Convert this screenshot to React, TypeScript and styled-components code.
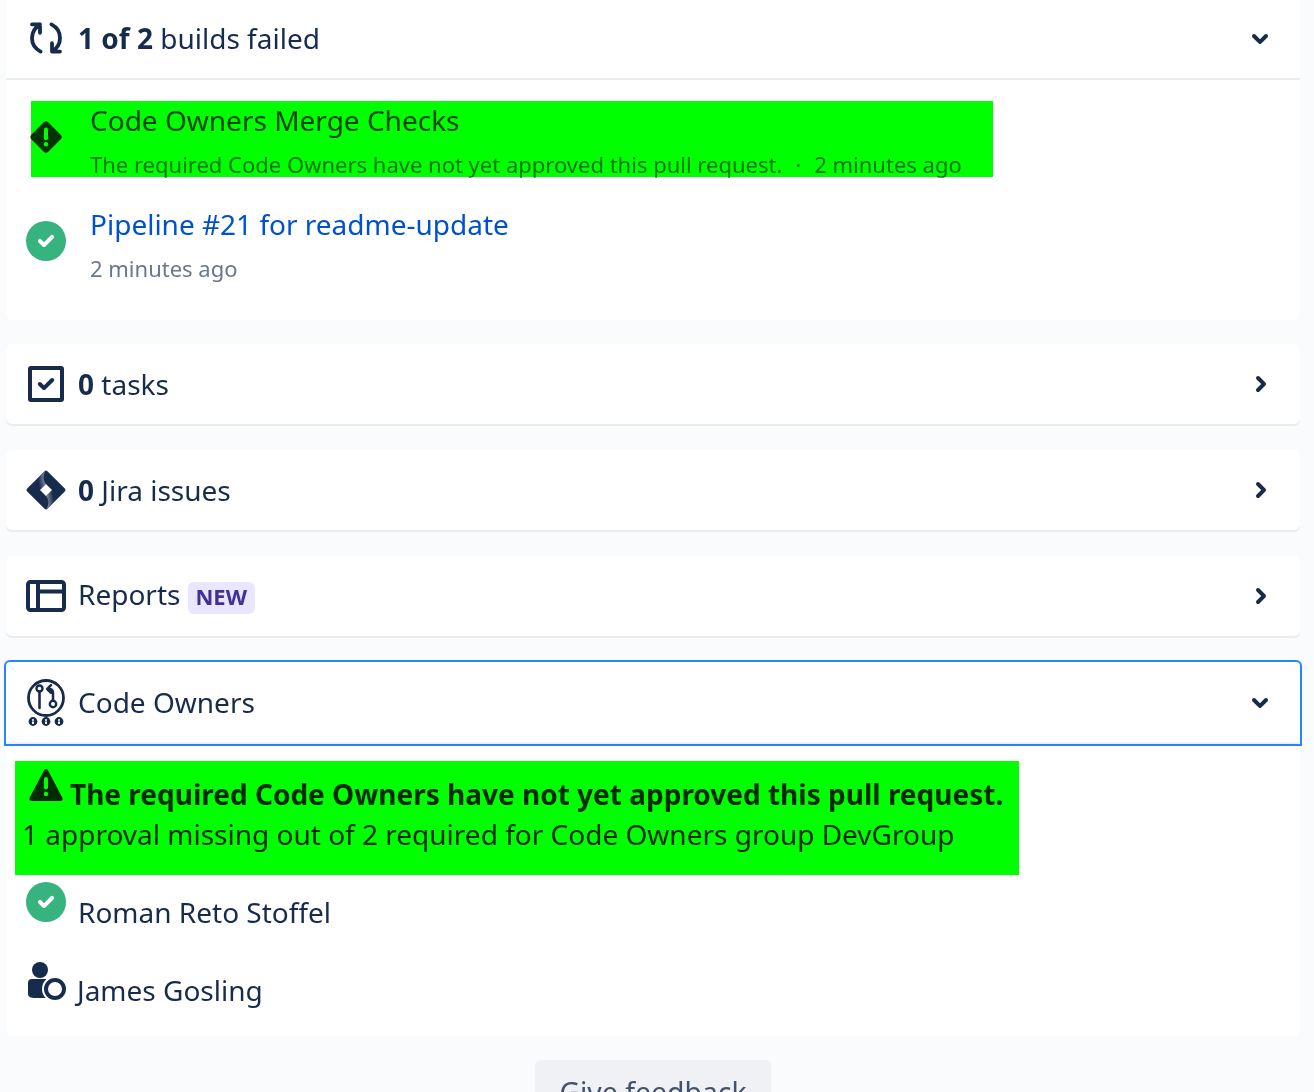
import React from "react";
import styled, { createGlobalStyle } from "styled-components";

const GlobalStyle = createGlobalStyle`
  html, body {
    margin: 0;
    height: 1092px;
    overflow: hidden;
    background: #fafbfc;
    color: #172b4d;
    font-family: "Noto Sans", "Liberation Sans", sans-serif;
    font-size: 28px;
  }
`;

const Page = styled.div`
  display: flex;
  flex-direction: column;
  padding: 0 14px 0 6px;
`;

const Card = styled.section<{ $flat?: boolean }>`
  background: #fff;
  border-radius: ${({ $flat }) => ($flat ? "0 0 6px 6px" : "6px")};
  margin-bottom: 24px;
`;

const CollapsedCard = styled(Card)`
  margin-bottom: 26px;
  box-shadow: 0 2px 0 #ebecf0;
`;

const Header = styled.div<{ $ruled?: boolean; $focused?: boolean }>`
  display: flex;
  align-items: center;
  height: 80px;
  padding: 0 16px;
  box-sizing: border-box;
  ${({ $ruled }) => $ruled && "padding-bottom: 2px; border-bottom: 2px solid #ebecf0;"}
  ${({ $focused }) =>
    $focused &&
    `
    margin: -2px -2px 0;
    height: 86px;
    padding-bottom: 2px;
    border: 2px solid #2684ff;
    border-radius: 6px 6px 0 0;
    box-shadow: inset 0 -2px 0 #f0f2f8;
  `}
`;

const IconSlot = styled.span`
  display: flex;
  flex: none;
  width: 48px;
  height: 48px;
`;

const BuildIcon = styled(IconSlot)`
  margin-top: 12px;
`;

const Title = styled.div`
  flex: 1;
  margin-left: 8px;
  line-height: 40px;
`;

const BadgedTitle = styled(Title)`
  display: flex;
  align-items: center;
  height: 40px;
`;

const TitleText = styled.span`
  padding-bottom: 4px;
`;

const Strong = styled.strong`
  font-weight: 700;
`;

const Badge = styled.span`
  margin: 4px 0 0 8px;
  padding: 0 8px 0 7px;
  height: 32px;
  line-height: 28px;
  border-radius: 6px;
  background: #eae6ff;
  color: #403294;
  font-size: 22px;
  font-weight: 700;
`;

const BuildList = styled.div`
  display: flex;
  flex-direction: column;
  gap: 28px;
  padding: 21px 0 39px 16px;
`;

const BuildRow = styled.div`
  position: relative;
  display: flex;
  align-items: flex-start;
  height: 76px;
`;

const BuildText = styled.div`
  margin: -1px 0 0 20px;
  white-space: nowrap;
`;

const BuildName = styled.div<{ $link?: boolean }>`
  line-height: 40px;
  color: ${({ $link }) => ($link ? "#0052cc" : "#344563")};
`;

const BuildMeta = styled.div`
  margin-top: 8px;
  line-height: 32px;
  font-size: 22px;
  color: #6b778c;
`;

const Dot = styled.span`
  margin: 0 13px;
`;

/* flat green marker laid over the finished row */
const Marker = styled.div<{ $left: number; $width: number }>`
  position: absolute;
  top: 0;
  bottom: 0;
  left: ${({ $left }) => $left}px;
  width: ${({ $width }) => $width}px;
  background: #00ff00;
  mix-blend-mode: multiply;
  pointer-events: none;
`;

const OwnersBody = styled.div`
  padding: 15px 0 18px;
`;

const Notice = styled.div`
  position: relative;
  margin-left: 9px;
  width: 1004px;
  height: 114px;
  padding: 8px 8px 0;
  box-sizing: border-box;
`;

const NoticeHead = styled.div`
  display: flex;
  align-items: flex-start;
  height: 46px;
`;

const NoticeTitle = styled.strong`
  padding-top: 5px;
  line-height: 40px;
  font-weight: 700;
`;

const NoticeIcon = styled.span`
  display: flex;
  margin: -8px 0 0 -1px;
`;

const NoticeLine = styled.div`
  margin: -1px 0 0 -1px;
  line-height: 40px;
`;

const Owner = styled.div<{ $height: number }>`
  display: flex;
  align-items: flex-start;
  height: ${({ $height }) => $height}px;
  padding: 3px 0 0 16px;
  box-sizing: border-box;
`;

const OwnerName = styled.span<{ $shift: number; $drop: number }>`
  margin-left: ${({ $shift }) => $shift}px;
  padding-top: ${({ $drop }) => $drop}px;
  line-height: 40px;
`;

const FeedbackRow = styled.div`
  display: flex;
  justify-content: center;
`;

const FeedbackButton = styled.button`
  width: 236px;
  height: 64px;
  border: 0;
  border-radius: 6px;
  background: #f0f1f4;
  color: #42526e;
  font: inherit;
  font-size: 28.4px;
  line-height: 40px;
  padding: 10px 0;
`;

const RefreshIcon = () => {
  const half = (
    <path
      d="M9.3 18.8C6.6 17.4 5 14.9 5 12c0-2.800 1.500-5.200 4-6.800M5 5.200h4v4.200"
      fill="none"
      stroke="currentColor"
      strokeWidth="1.9"
      strokeLinecap="round"
      strokeLinejoin="round"
    />
  );
  return (
    <svg width="48" height="48" viewBox="0 0 24 24">
      {half}
      <g transform="rotate(180 12 12)">{half}</g>
    </svg>
  );
};

const Chevron = ({ open }: { open: boolean }) => (
  <svg width="48" height="48" viewBox="0 0 24 24" style={open ? undefined : { transform: "rotate(-90deg)" }}>
    <path
      fill="currentColor"
      d="M8.292 10.293a1.009 1.009 0 0 0 0 1.419l2.939 2.965c.218.215.5.322.779.322s.556-.107.769-.322l2.93-2.955a1.01 1.01 0 0 0 0-1.419.987.987 0 0 0-1.406 0l-2.298 2.317-2.307-2.327a.99.99 0 0 0-1.406 0z"
    />
  </svg>
);

const ErrorIcon = () => (
  <svg width="48" height="48" viewBox="0 0 24 24">
    <rect x="6" y="6" width="12" height="12" rx="1.6" transform="rotate(45 12 12)" fill="#de350b" />
    <rect x="11" y="7.2" width="2" height="6.4" rx="1" fill="#fff" />
    <circle cx="12" cy="15.6" r="1.1" fill="#fff" />
  </svg>
);

const CheckCircle = () => (
  <svg width="48" height="48" viewBox="0 0 24 24">
    <circle cx="12" cy="12" r="10" fill="#36b37e" />
    <path
      fill="#fff"
      d="M9.707 11.293a1 1 0 1 0-1.414 1.414l2 2a1 1 0 0 0 1.414 0l4-4a1 1 0 1 0-1.414-1.414L11 12.586l-1.293-1.293z"
    />
  </svg>
);

const TasksIcon = () => (
  <svg width="48" height="48" viewBox="0 0 24 24">
    <rect x="4" y="4" width="16" height="16" rx="0.5" fill="none" stroke="currentColor" strokeWidth="2" />
    <path d="M8.9 12l2.1 2.1 4.1-4.1" fill="none" stroke="currentColor" strokeWidth="2" strokeLinecap="round" strokeLinejoin="round" />
  </svg>
);

const JiraIcon = () => {
  const band = (
    <path fill="url(#jiraBand)" d="M12 21.7L15.4 18.3c1-1.2 1.2-4.2-.4-6.3l-3 3c1.6 1.8 1.6 5 0 6.7z" />
  );
  return (
    <svg width="48" height="48" viewBox="0 0 24 24">
      <defs>
        <linearGradient id="jiraBand" x1="0.1" y1="0.7" x2="0.9" y2="0.4">
          <stop offset="0" stopColor="#fff" stopOpacity="0.5" />
          <stop offset="1" stopColor="#fff" stopOpacity="0" />
        </linearGradient>
      </defs>
      <path
        fill="currentColor"
        fillRule="evenodd"
        d="M11.3 2.6a1 1 0 0 1 1.4 0l8.7 8.7a1 1 0 0 1 0 1.4l-8.7 8.7a1 1 0 0 1-1.4 0l-8.7-8.7a1 1 0 0 1 0-1.4zM12 9l-3 3 3 3 3-3z"
      />
      {band}
      <g transform="rotate(180 12 12)">{band}</g>
    </svg>
  );
};

const ReportsIcon = () => (
  <svg width="48" height="48" viewBox="0 0 24 24">
    <rect x="3" y="5" width="18" height="14" rx="1.2" fill="none" stroke="currentColor" strokeWidth="2" />
    <path d="M8 5v14M8 9.75h13" fill="none" stroke="currentColor" strokeWidth="2" />
  </svg>
);

const CodeOwnersIcon = () => (
  <svg width="48" height="50" viewBox="0 -1 48 50">
    <circle cx="24" cy="19" r="17.5" fill="none" stroke="currentColor" strokeWidth="2.8" />
    <circle cx="17.5" cy="9.5" r="3" fill="none" stroke="currentColor" strokeWidth="2.4" />
    <path d="M17.5 12.5V29" fill="none" stroke="currentColor" strokeWidth="2.6" strokeLinecap="round" />
    <path
      d="M31 21.5V14c0-2.5-1.5-4-4-4h-1.500M29 6.200L25.200 10l3.800 3.800"
      fill="none"
      stroke="currentColor"
      strokeWidth="2.500"
      strokeLinecap="round"
      strokeLinejoin="round"
    />
    <circle cx="31" cy="25" r="3.200" fill="none" stroke="currentColor" strokeWidth="2.400" />
    {[11, 24, 37].map((cx) => (
      <g key={cx}>
        <circle cx={cx} cy="42.500" r="4.400" fill="currentColor" />
        <circle cx={cx} cy="40.900" r="1" fill="#fff" />
        <rect x={cx - 1} y="42.500" width="2" height="2.400" fill="#fff" />
      </g>
    ))}
  </svg>
);

const WarningIcon = () => (
  <svg width="48" height="48" viewBox="0 0 24 24">
    <path
      fill="currentColor"
      d="M12.900 4.500l7.300 13.900c.4.800-.1 1.600-1 1.600H4.800c-.9 0-1.400-.8-1-1.600l7.300-13.900c.4-.7 1.400-.7 1.800 0z"
    />
    <rect x="11" y="8" width="2" height="6.300" rx="1" fill="#fff" />
    <circle cx="12" cy="16.500" r="1.100" fill="#fff" />
  </svg>
);

const PersonPendingIcon = () => (
  <svg width="48" height="48" viewBox="0 0 48 48">
    <circle cx="18" cy="10" r="8" fill="currentColor" />
    <path fill="currentColor" d="M6 23a4 4 0 0 1 4-4h14v19H13c-4 0-7-1-7-4z" />
    <circle cx="33" cy="29" r="13" fill="#fff" />
    <circle cx="33" cy="29" r="9" fill="none" stroke="currentColor" strokeWidth="4" />
  </svg>
);

export default function App() {
  return (
    <>
      <GlobalStyle />
      <Page>
        <Card $flat>
          <Header $ruled>
            <IconSlot>
              <RefreshIcon />
            </IconSlot>
            <Title>
              <Strong>1 of 2</Strong> builds failed
            </Title>
            <IconSlot>
              <Chevron open />
            </IconSlot>
          </Header>
          <BuildList>
            <BuildRow>
              <BuildIcon>
                <ErrorIcon />
              </BuildIcon>
              <BuildText>
                <BuildName>Code Owners Merge Checks</BuildName>
                <BuildMeta>
                  The required Code Owners have not yet approved this pull request.
                  <Dot>·</Dot>2 minutes ago
                </BuildMeta>
              </BuildText>
              <Marker $left={9} $width={962} />
            </BuildRow>
            <BuildRow>
              <BuildIcon>
                <CheckCircle />
              </BuildIcon>
              <BuildText>
                <BuildName $link>Pipeline #21 for readme-update</BuildName>
                <BuildMeta>2 minutes ago</BuildMeta>
              </BuildText>
            </BuildRow>
          </BuildList>
        </Card>

        <CollapsedCard>
          <Header>
            <IconSlot>
              <TasksIcon />
            </IconSlot>
            <Title>
              <Strong>0</Strong> tasks
            </Title>
            <IconSlot>
              <Chevron open={false} />
            </IconSlot>
          </Header>
        </CollapsedCard>

        <CollapsedCard>
          <Header>
            <IconSlot>
              <JiraIcon />
            </IconSlot>
            <Title>
              <Strong>0</Strong> Jira issues
            </Title>
            <IconSlot>
              <Chevron open={false} />
            </IconSlot>
          </Header>
        </CollapsedCard>

        <CollapsedCard>
          <Header>
            <IconSlot>
              <ReportsIcon />
            </IconSlot>
            <BadgedTitle>
              <TitleText>Reports</TitleText>
              <Badge>NEW</Badge>
            </BadgedTitle>
            <IconSlot>
              <Chevron open={false} />
            </IconSlot>
          </Header>
        </CollapsedCard>

        <Card>
          <Header $focused>
            <IconSlot>
              <CodeOwnersIcon />
            </IconSlot>
            <Title>Code Owners</Title>
            <IconSlot>
              <Chevron open />
            </IconSlot>
          </Header>
          <OwnersBody>
            <Notice>
              <NoticeHead>
                <NoticeIcon>
                  <WarningIcon />
                </NoticeIcon>
                <NoticeTitle>The required Code Owners have not yet approved this pull request.</NoticeTitle>
              </NoticeHead>
              <NoticeLine>1 approval missing out of 2 required for Code Owners group DevGroup</NoticeLine>
              <Marker $left={0} $width={1004} />
            </Notice>
            <Owner $height={82}>
              <IconSlot>
                <CheckCircle />
              </IconSlot>
              <OwnerName $shift={8} $drop={14}>
                Roman Reto Stoffel
              </OwnerName>
            </Owner>
            <Owner $height={61}>
              <IconSlot>
                <PersonPendingIcon />
              </IconSlot>
              <OwnerName $shift={7} $drop={10}>
                James Gosling
              </OwnerName>
            </Owner>
          </OwnersBody>
        </Card>

        <FeedbackRow>
          <FeedbackButton>Give feedback</FeedbackButton>
        </FeedbackRow>
      </Page>
    </>
  );
}
